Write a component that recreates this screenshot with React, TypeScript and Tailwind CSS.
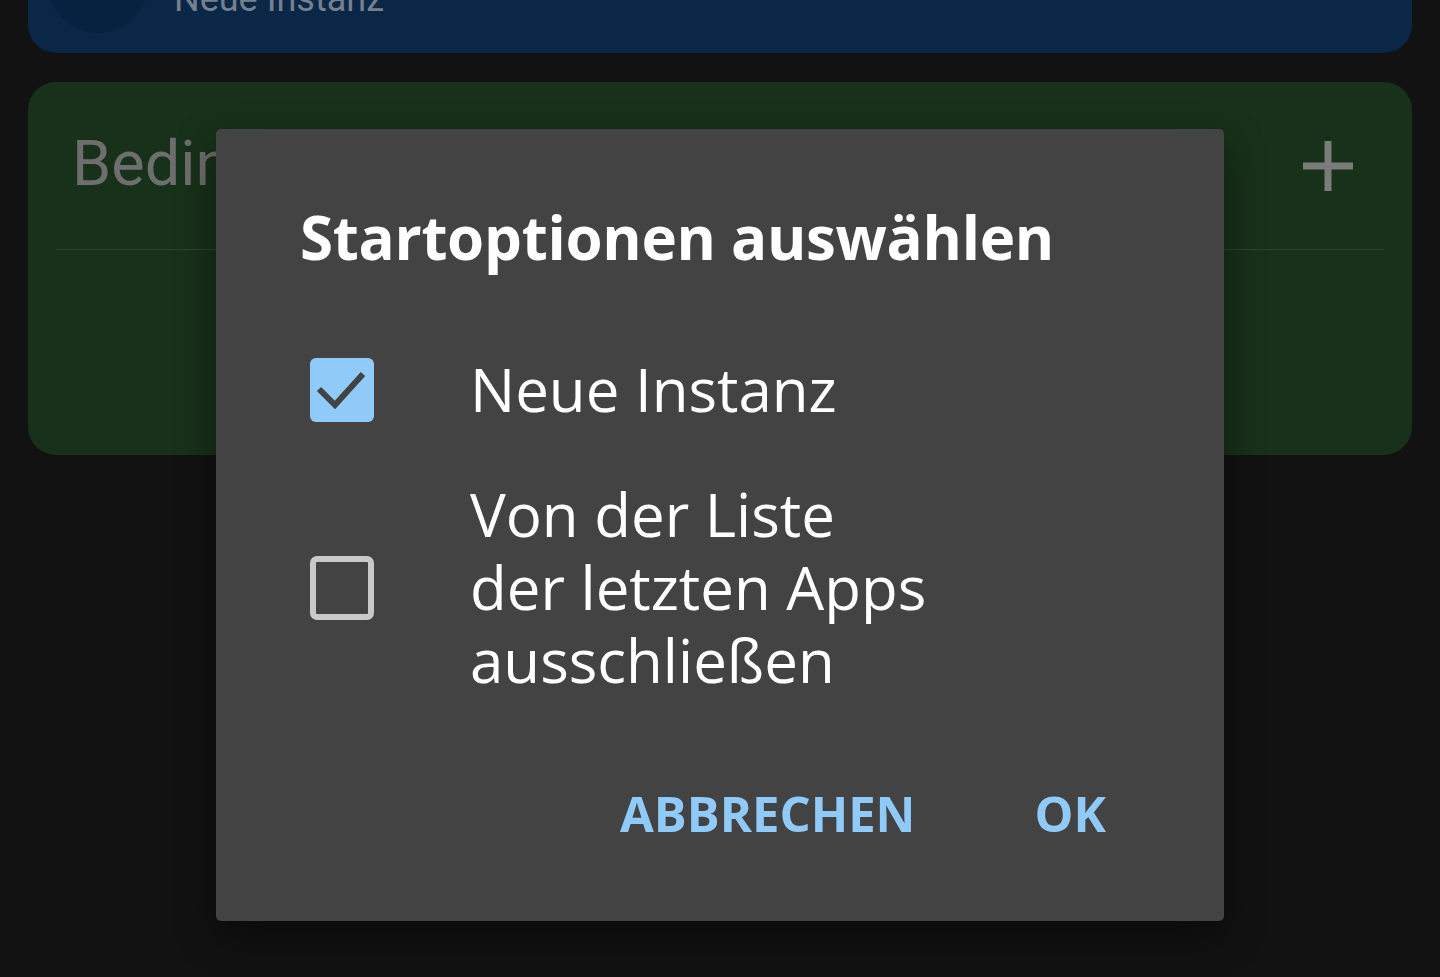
import React from "react";

const Checkbox = ({ checked }: { checked: boolean }) =>
  checked ? (
    <div className="w-16 h-16 rounded-[6px] bg-[#90caf9]">
      <svg width="64" height="64" viewBox="0 0 64 64" fill="none">
        <path d="M9 31l16 16L53 16" stroke="#434343" strokeWidth="6" />
      </svg>
    </div>
  ) : (
    <div className="w-16 h-16 rounded-[7px] border-[6px] border-[#c9c9c9]" />
  );

const App = () => {
  return (
    <div className="relative w-[1440px] h-[977px] overflow-hidden bg-[#121212] font-['Roboto',sans-serif]">
      <div className="px-[28px]">
        <div className="mt-[-87px] h-[140px] rounded-[28px] bg-[#0a2747] flex items-start pl-[20px] gap-[26px]">
          <div className="mt-[20px] w-[100px] h-[100px] rounded-full bg-[#072241]" />
          <span className="mt-[63px] text-[36px] leading-[47px] text-[#76808c]">Neue Instanz</span>
        </div>

        <div className="mt-[29px] h-[373px] rounded-[28px] bg-[#18311a] px-[28px]">
          <div className="h-[168px] flex items-center justify-between border-b border-[#2b452d] pl-[16px] pr-[30px]">
            <span className="text-[63px] text-[#6e6e6e] mt-[-2px]">Bedingungen</span>
            <svg width="52" height="52" viewBox="0 0 52 52">
              <path d="M26 1v50M1 26h50" stroke="#7b7b7b" strokeWidth="7" />
            </svg>
          </div>
        </div>
      </div>

      <div className="absolute left-[216px] top-[129px] w-[1008px] h-[792px] rounded-[5px] bg-[#434343] shadow-[0_14px_40px_rgba(0,0,0,0.45)] font-['Open_Sans',sans-serif]">
        <div className="pl-[84px] pr-[60px] pt-[60px]">
          <h2 className="text-[60px] font-bold text-white leading-[96px] tracking-[-0.3px]">
            Startoptionen auswählen
          </h2>

          <div className="mt-[68px] flex items-center gap-[96px] pl-[10px]">
            <Checkbox checked />
            <span className="text-[60px] text-white leading-[73px]">Neue Instanz</span>
          </div>

          <div className="mt-[52px] flex items-center gap-[96px] pl-[10px]">
            <Checkbox checked={false} />
            <span className="text-[60px] text-white leading-[73px]">
              Von der Liste
              <br />
              der letzten Apps
              <br />
              ausschließen
            </span>
          </div>

          <div className="mt-[80px] flex justify-end gap-[119px] pr-[58px]">
            <button className="text-[49px] font-bold text-[#90caf9]">ABBRECHEN</button>
            <button className="text-[49px] font-bold text-[#90caf9]">OK</button>
          </div>
        </div>
      </div>
    </div>
  );
};

export default App;
